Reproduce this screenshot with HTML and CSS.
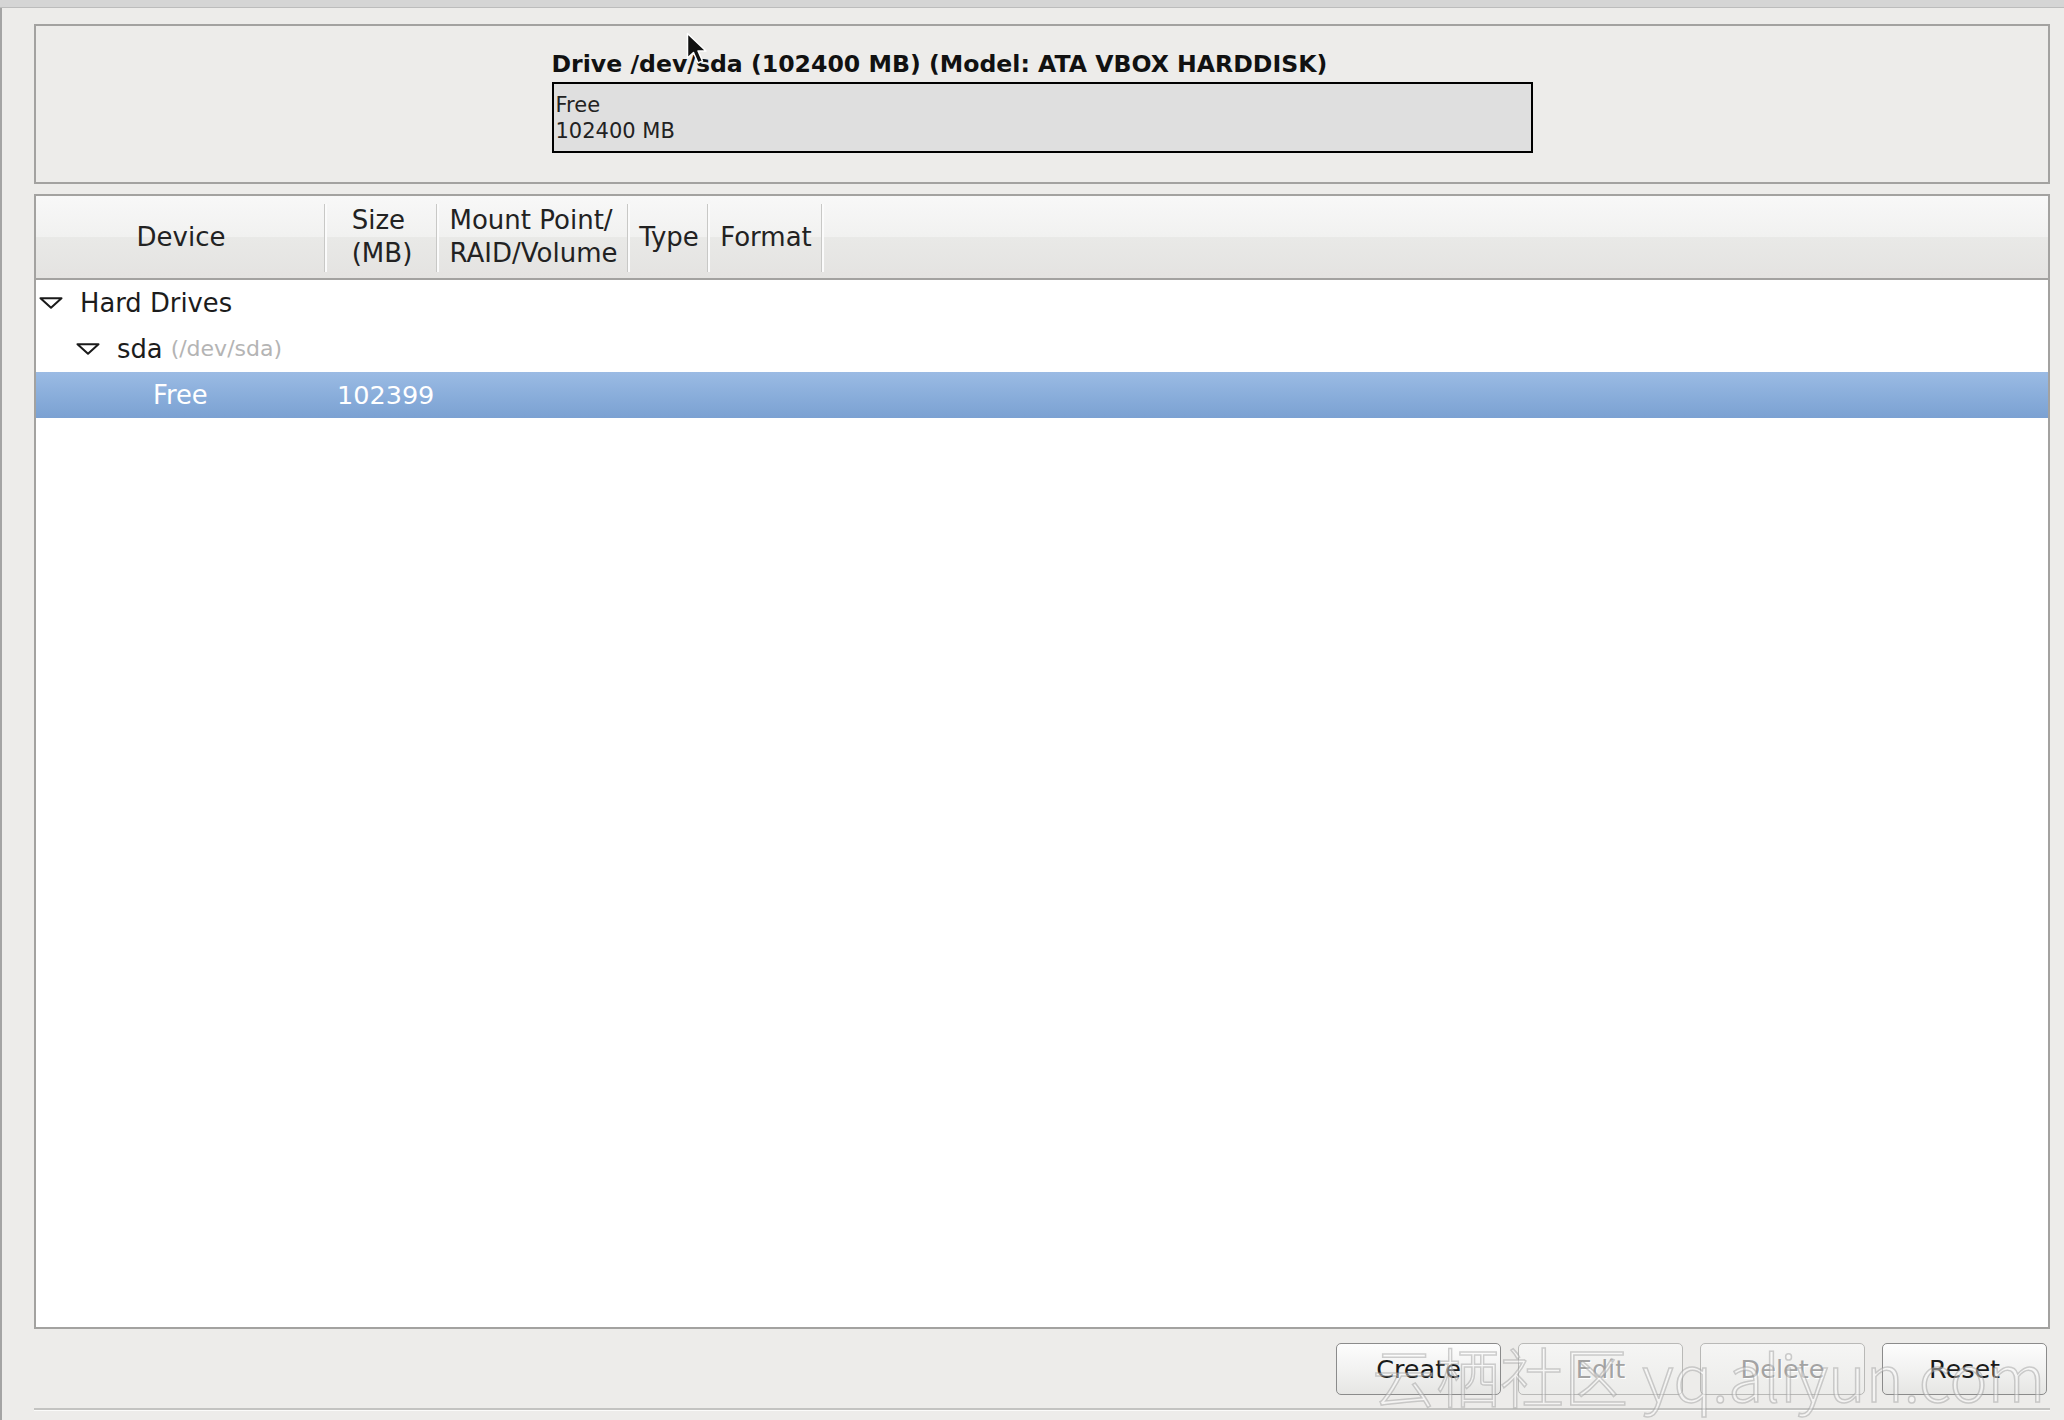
FILE: index.html
```html
<!DOCTYPE html>
<html lang="en">
<head>
<meta charset="utf-8">
<title>Partitioning</title>
<link rel="stylesheet" href="styles.css">
</head>
<body>
<div class="topbar"></div>
<div class="window">
  <div class="drive-frame">
    <div class="drive-inner">
      <div class="drive-title">Drive /dev/sda (102400 MB) (Model: ATA VBOX HARDDISK)</div>
      <div class="drive-bar">
        <div>Free</div>
        <div>102400 MB</div>
      </div>
    </div>
  </div>

  <div class="tree-frame">
    <div class="tree-header">
      <div class="hcell col-device"><span class="hlabel">Device</span></div>
      <div class="hcell col-size"><span class="hlabel">Size<br>(MB)</span></div>
      <div class="hcell col-mount"><span class="hlabel">Mount Point/<br>RAID/Volume</span></div>
      <div class="hcell col-type"><span class="hlabel">Type</span></div>
      <div class="hcell col-format"><span class="hlabel">Format</span></div>
      <div class="hcell col-rest"></div>
    </div>
    <div class="row">
      <div class="c-device lvl1">
        <svg class="expander" width="24" height="12" viewBox="0 0 24 12"><polygon points="1.5,1.2 22.5,1.2 12,10.8" fill="#fff" stroke="#1a1a1a" stroke-width="2" stroke-linejoin="round"/></svg>
        <span class="name">Hard Drives</span>
      </div>
    </div>
    <div class="row">
      <div class="c-device lvl2">
        <svg class="expander" width="24" height="12" viewBox="0 0 24 12"><polygon points="1.5,1.2 22.5,1.2 12,10.8" fill="#fff" stroke="#1a1a1a" stroke-width="2" stroke-linejoin="round"/></svg>
        <span class="name">sda</span><span class="path">(/dev/sda)</span>
      </div>
    </div>
    <div class="row selected">
      <div class="c-device lvl3"><span class="name">Free</span></div>
      <div class="c-size">102399</div>
    </div>
  </div>

  <div class="buttons">
    <button class="btn">Create</button>
    <button class="btn disabled">Edit</button>
    <button class="btn disabled">Delete</button>
    <button class="btn">Reset</button>
  </div>
  <div class="sep"></div>
</div>

<div class="watermark">云栖社区 yq.aliyun.com</div>

<svg class="cursor" width="26" height="34" viewBox="0 0 26 34">
  <path d="M1.5 1.5 L1.5 26 L7.5 20.5 L12 31 L16.5 29 L12 19 L20 19 Z" fill="#111" stroke="#fff" stroke-width="1.5" stroke-linejoin="round"/>
</svg>
</body>
</html>
```

FILE: styles.css
```css
* {
  box-sizing: border-box;
}

html, body {
  margin: 0;
  padding: 0;
}

body {
  width: 2064px;
  height: 1420px;
  overflow: hidden;
  position: relative;
  background: #edecea;
  font-family: "DejaVu Sans", "Noto Sans", sans-serif;
  color: #1c1c1c;
}

.topbar {
  height: 8px;
  background: #d5d5d5;
  border-bottom: 1px solid #bcbcbc;
}

.window {
  height: 1412px;
  border-left: 2px solid #a4a4a4;
  padding: 16px 14px 0 32px;
}

/* ---------- drive overview ---------- */
.drive-frame {
  height: 160px;
  border: 2px solid #a3a2a0;
  padding-top: 24px;
  display: flex;
  justify-content: center;
}

.drive-inner {
  width: 981px;
  display: flex;
  flex-direction: column;
}

.drive-title {
  font-weight: bold;
  font-size: 23.6px;
  line-height: 28px;
  color: #111;
  margin-bottom: 4px;
  white-space: nowrap;
}

.drive-bar {
  width: 981px;
  height: 71px;
  border: 2px solid #000;
  background: #dfdfdf;
  padding: 8px 2px 0;
  font-size: 21px;
  line-height: 26px;
  color: #222;
}

/* ---------- tree ---------- */
.tree-frame {
  margin-top: 10px;
  height: 1135px;
  border: 2px solid #a3a2a0;
  background: #fff;
}

.tree-header {
  display: flex;
  height: 84px;
  border-bottom: 2px solid #a3a2a0;
  background: linear-gradient(#f8f8f8, #f1f1f0 50%, #e9e9e7 50%, #e4e3e1);
}

.hcell {
  position: relative;
  display: flex;
  align-items: center;
  justify-content: center;
}

.hcell::after {
  content: "";
  position: absolute;
  right: -1px;
  top: 8px;
  bottom: 6px;
  width: 2px;
  border-left: 1px solid #c8c8c6;
  background: #fbfbfb;
}

.col-rest::after {
  display: none;
}

.col-device { width: 290px; }
.col-size { width: 112px; }
.col-mount { width: 191px; }
.col-type { width: 80px; }
.col-format { width: 114px; }
.col-rest { flex: 1; }

.hlabel {
  display: inline-block;
  text-align: left;
  font-size: 26px;
  line-height: 33px;
  color: #222;
  white-space: nowrap;
}

.row {
  display: flex;
  align-items: center;
  height: 46px;
  font-size: 25.8px;
  line-height: 46px;
  color: #1c1c1c;
}

.row.selected {
  background: linear-gradient(#9bbbe4, #8aaedb 50%, #7ba1d2);
  color: #fff;
}

.c-device {
  width: 290px;
  display: flex;
  align-items: center;
  white-space: nowrap;
}

.lvl1 { padding-left: 3px; }
.lvl2 { padding-left: 40px; }
.lvl3 { padding-left: 117px; }

.expander {
  display: block;
  flex: none;
}

.lvl1 .expander { margin-right: 17px; }
.lvl2 .expander { margin-right: 17px; }

.path {
  font-size: 22px;
  color: #b4b4b4;
  margin-left: 8px;
}

.c-size {
  padding-left: 11px;
  font-size: 25.5px;
}

/* ---------- buttons ---------- */
.buttons {
  display: flex;
  justify-content: flex-end;
  gap: 17px;
  padding-right: 3px;
  margin-top: 14px;
}

.btn {
  width: 165px;
  height: 52px;
  margin: 0;
  padding: 0;
  border: 1px solid #8b8b8b;
  border-radius: 5px;
  background: linear-gradient(#fdfdfd, #f2f2f1 50%, #e6e6e4);
  font-family: "DejaVu Sans", sans-serif;
  font-size: 25.5px;
  color: #1a1a1a;
  display: flex;
  align-items: center;
  justify-content: center;
}

.btn.disabled {
  border-color: #b9b9b7;
  color: #a3a3a3;
  background: linear-gradient(#f5f5f4, #ececea);
  text-shadow: 1px 1px 0 #fff;
}

.sep {
  margin-top: 13px;
  height: 3px;
  border-top: 2px solid #c3c3c1;
  background: #fbfbfa;
}

/* ---------- overlays ---------- */
.watermark {
  position: absolute;
  left: 1372px;
  top: 1334px;
  font-family: "Noto Sans CJK SC", "Noto Sans", sans-serif;
  font-weight: 300;
  font-size: 64px;
  line-height: 80px;
  white-space: nowrap;
  color: rgba(255, 255, 255, 0.4);
  -webkit-text-stroke: 1.5px rgba(150, 150, 150, 0.45);
  pointer-events: none;
}

.cursor {
  position: absolute;
  left: 686px;
  top: 32px;
}
```
